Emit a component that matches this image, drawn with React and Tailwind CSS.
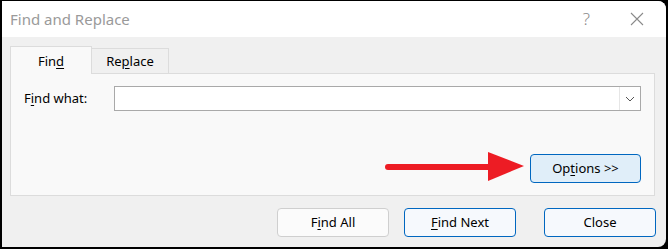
const font = { fontFamily: '"Segoe UI", "Noto Sans", "Open Sans", sans-serif' };

const Button = ({ children, className = "" }) => (
  <button
    className={`h-[29px] w-[112px] rounded-[4px] border text-[13px] text-black ${className}`}
  >
    {children}
  </button>
);

export default function App() {
  return (
    <div
      className="relative h-[249px] w-[668px] bg-black pb-[2px] pl-[2px] pr-[2px] pt-[1px]"
      style={font}
    >
      <div className="flex h-full flex-col overflow-hidden rounded-r-[8px] bg-[#f0f0f0]">
        {/* Title bar */}
        <div className="flex h-[36px] items-center justify-between bg-white pl-[8px]">
          <span className="text-[15px] text-[#9a9a9a]">Find and Replace</span>
          <div className="flex items-center text-[#8a8a8a]">
            <span className="mr-[40px] text-[17px] font-light">?</span>
            <svg width="14" height="14" viewBox="0 0 14 14" className="mr-[22px]">
              <path d="M1 1L13 13M13 1L1 13" stroke="#8a8a8a" strokeWidth="1.1" fill="none" />
            </svg>
          </div>
        </div>

        {/* Body */}
        <div className="flex flex-1 flex-col pl-[8px] pr-[10px] pt-[9px]">
          {/* Tabs */}
          <div className="flex h-[27px] items-end">
            <div className="relative z-10 -mb-px flex h-[28px] w-[82px] items-center justify-center border border-b-0 border-[#dcdcdc] bg-[#f9f9f9] pt-[3px] text-[13px] text-black">
              <span>
                Fin<span className="underline underline-offset-2">d</span>
              </span>
            </div>
            <div className="flex h-[25px] w-[77px] items-center justify-center border border-b-0 border-l-0 border-[#dcdcdc] bg-[#f0f0f0] pt-[2px] text-[13px] text-black">
              <span>
                Re<span className="underline underline-offset-2">p</span>lace
              </span>
            </div>
          </div>

          {/* Panel */}
          <div className="mr-[1px] flex h-[123px] flex-col border border-[#dcdcdc] bg-[#f9f9f9] pl-[13px] pr-[13px] pt-[12px]">
            <div className="flex items-center">
              <span className="w-[90px] text-[13px] text-black">
                F<span className="underline underline-offset-2">i</span>nd what:
              </span>
              <div className="flex h-[25px] flex-1 items-stretch border border-[#a9a9a9] bg-white">
                <div className="flex-1" />
                <div className="flex w-[21px] items-center justify-center border-l border-[#e6e6e6]">
                  <svg width="10" height="6" viewBox="0 0 10 6">
                    <path d="M1 1L5 5L9 1" stroke="#555" strokeWidth="1" fill="none" />
                  </svg>
                </div>
              </div>
            </div>
            <div className="mt-[43px] flex justify-end">
              <button className="h-[29px] w-[111px] rounded-[4px] border border-[#0067c0] bg-[#e0eef9] text-[13px] text-black">
                Op<span className="underline underline-offset-2">t</span>ions &gt;&gt;
              </button>
            </div>
          </div>

          {/* Bottom buttons */}
          <div className="mt-[12px] flex justify-end">
            <Button className="border-[#cfcfcf] bg-[#fbfbfb]">
              F<span className="underline underline-offset-2">i</span>nd All
            </Button>
            <Button className="ml-[15px] border-[#0067c0] bg-[#f6f9fd]">
              <span className="underline underline-offset-2">F</span>ind Next
            </Button>
            <Button className="ml-[28px] border-[#0067c0] bg-[#f6f9fd]">Close</Button>
          </div>
        </div>
      </div>

      {/* Red arrow annotation */}
      <svg
        className="pointer-events-none absolute left-0 top-0"
        width="668"
        height="249"
        viewBox="0 0 668 249"
      >
        <line x1="388" y1="167" x2="492" y2="167" stroke="#ed1c24" strokeWidth="6" strokeLinecap="round" />
        <polygon points="488,152 524,166 488,181" fill="#ed1c24" />
      </svg>
    </div>
  );
}
